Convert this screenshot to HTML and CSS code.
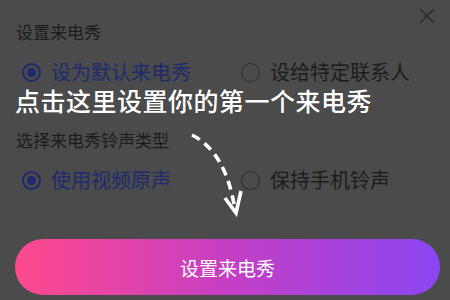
FILE: index.html
```html
<!DOCTYPE html>
<html lang="zh">
<head>
<meta charset="utf-8">
<link rel="stylesheet" href="styles.css">
</head>
<body>
<div class="dialog">
  <button class="close" aria-label="关闭">
    <svg width="16" height="16" viewBox="0 0 16 16"><path d="M1.5 1.5 L14.5 14.5 M14.5 1.5 L1.5 14.5" stroke="#2c2c2c" stroke-width="1.6" fill="none"/></svg>
  </button>
  <div class="title first">设置来电秀</div>
  <div class="options">
    <div class="option selected"><span class="radio"></span><span class="label">设为默认来电秀</span></div>
    <div class="option"><span class="radio"></span><span class="label">设给特定联系人</span></div>
  </div>
  <div class="title second">选择来电秀铃声类型</div>
  <div class="options">
    <div class="option selected"><span class="radio"></span><span class="label">使用视频原声</span></div>
    <div class="option"><span class="radio"></span><span class="label">保持手机铃声</span></div>
  </div>
  <button class="primary">设置来电秀</button>

  <div class="guide">点击这里设置你的第一个来电秀</div>
  <svg class="arrow" width="64" height="92" viewBox="0 0 64 92">
    <path d="M6 7 Q40 24 49 82" stroke="#fff" stroke-width="3.6" stroke-dasharray="9 6" fill="none" stroke-linecap="butt"/>
    <path d="M39 70 L50 85 L55 63" stroke="#fff" stroke-width="3.6" fill="none" stroke-linejoin="miter" stroke-linecap="butt"/>
  </svg>
</div>
</body>
</html>
```
FILE: styles.css
```css
html, body {
  margin: 0;
  padding: 0;
}
body {
  width: 450px;
  height: 300px;
  overflow: hidden;
  background: #4b4b4b;
  font-family: "Noto Sans CJK SC", "Noto Sans", sans-serif;
}
.dialog {
  position: relative;
  height: 300px;
  padding: 20px 10px 0 16px;
  box-sizing: border-box;
  display: flex;
  flex-direction: column;
}
.close {
  position: absolute;
  top: 8px;
  right: 15px;
  padding: 0;
  border: 0;
  background: none;
  line-height: 0;
}
.title {
  font-size: 17px;
  line-height: 24px;
  height: 24px;
  color: #1c1c1c;
}
.title.second {
  margin-top: 36px;
}
.options {
  display: grid;
  grid-template-columns: 219px 1fr;
  height: 40px;
  margin-top: 8px;
  padding-left: 6px;
}
.option {
  display: flex;
  align-items: center;
  gap: 10px;
  font-size: 20px;
  color: #1c1c1c;
}
.label {
  line-height: 22px;
}
.radio {
  width: 19px;
  height: 19px;
  border: 1.8px solid #2c2c2c;
  border-radius: 50%;
  box-sizing: border-box;
  display: flex;
  align-items: center;
  justify-content: center;
  flex: none;
}
.option.selected {
  color: #1e2a6e;
}
.option.selected .radio {
  border: 2px solid #1e2a6e;
}
.option.selected .radio::after {
  content: "";
  width: 9px;
  height: 9px;
  border-radius: 50%;
  background: #1e2a6e;
}
.primary {
  margin-top: 39px;
  margin-left: -1px;
  width: 425px;
  height: 56px;
  border: 0;
  border-radius: 28px;
  background: linear-gradient(90deg, #ff4a8c 0%, #c43fc4 50%, #8a46f2 100%);
  color: #fff;
  font-family: "Noto Sans CJK SC", "Noto Sans", sans-serif;
  font-size: 19px;
  padding: 0;
}
.guide {
  position: absolute;
  left: 15px;
  top: 87px;
  font-size: 25px;
  line-height: 26px;
  color: #fff;
  letter-spacing: 0.5px;
  font-weight: 500;
}
.arrow {
  position: absolute;
  left: 186px;
  top: 128px;
}
```
